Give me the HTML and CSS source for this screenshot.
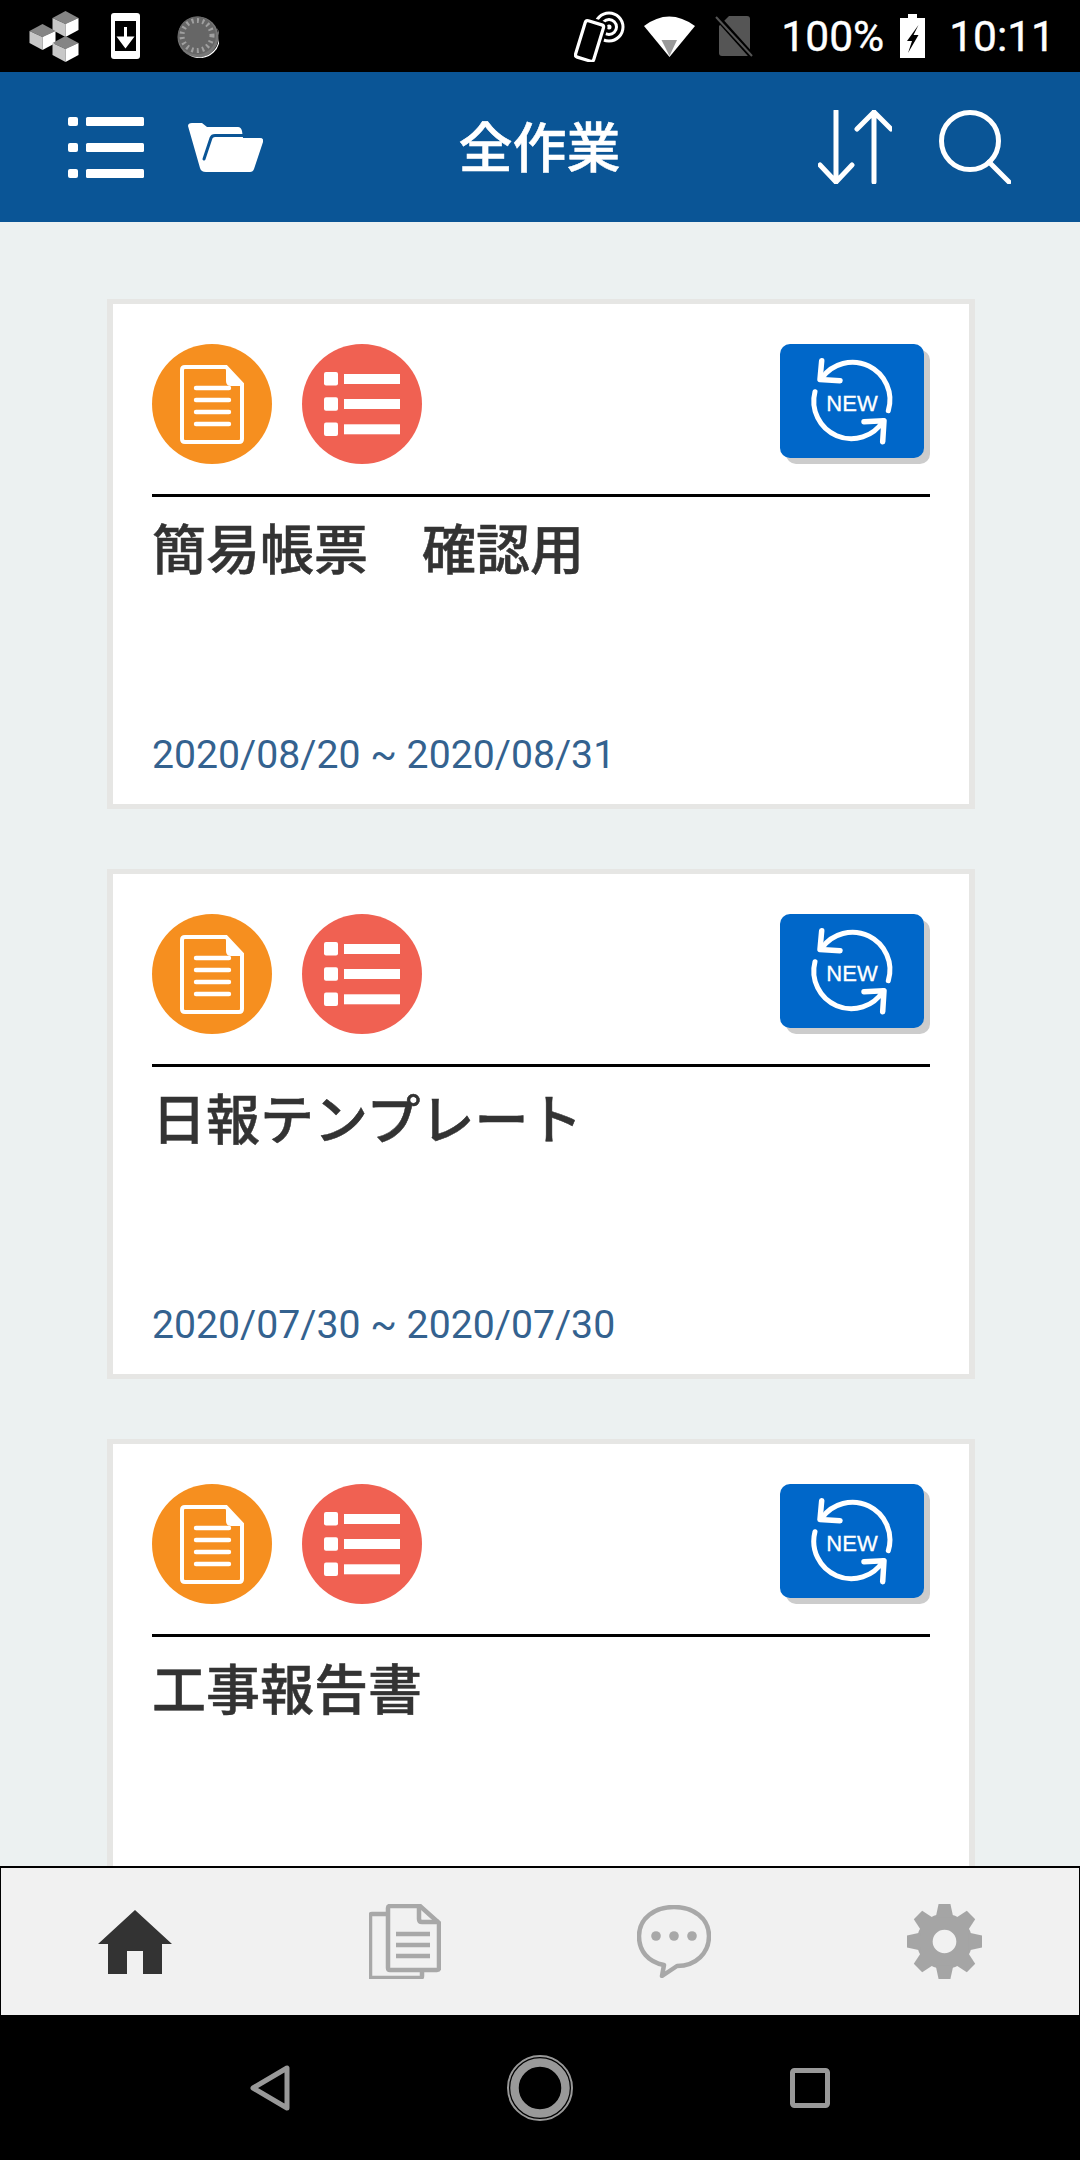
FILE: index.html
```html
<!DOCTYPE html>
<html lang="ja">
<head>
<meta charset="utf-8">
<title>全作業</title>
<link rel="stylesheet" href="styles.css">
</head>
<body>
<svg class="sprite" aria-hidden="true">
  <symbol id="doc-round" viewBox="0 0 120 120">
    <circle cx="60" cy="60" r="60" fill="#f68f1f"/>
    <path d="M33 23H74L90 40V95Q90 98 87 98H33Q30 98 30 95V26Q30 23 33 23Z" fill="none" stroke="#fff" stroke-width="4"/>
    <path d="M74 22L92 42H79Q74 42 74 37Z" fill="#fff"/>
    <path d="M44 44H77M44 56H77M44 68H77M44 80H77" stroke="#fff" stroke-width="4.4" stroke-linecap="round"/>
  </symbol>
  <symbol id="list-round" viewBox="0 0 120 120">
    <circle cx="60" cy="60" r="60" fill="#f06152"/>
    <rect x="22" y="28" width="14" height="13.4" rx="2" fill="#fff"/>
    <rect x="22" y="53.3" width="14" height="13.4" rx="2" fill="#fff"/>
    <rect x="22" y="78.6" width="14" height="13.4" rx="2" fill="#fff"/>
    <rect x="42" y="30" width="56" height="10" fill="#fff"/>
    <rect x="42" y="55" width="56" height="10" fill="#fff"/>
    <rect x="42" y="80.3" width="56" height="10" fill="#fff"/>
  </symbol>
  <symbol id="new-sync" viewBox="0 0 144 114">
    <path d="M41.7 34.3A37.5 37.5 0 0 1 108.300 66.700M35 47.700A37.500 37.500 0 0 0 103.300 76.700" fill="none" stroke="#fff" stroke-width="5" stroke-linecap="round"/>
    <path d="M41.7 16.7L40 35.5L60 36.7M84 77.7L104 76.7L102.7 97.7" fill="none" stroke="#fff" stroke-width="5.5" stroke-linecap="round" stroke-linejoin="round"/>
  </symbol>
  <symbol id="cube" viewBox="0 0 26 26">
    <path d="M13 0L26 7L13 13L0 7Z" fill="#858585"/>
    <path d="M0 7L13 13V26L0 19Z" fill="#c8c8c8"/>
    <path d="M26 7L13 13V26L26 19Z" fill="#fff"/>
  </symbol>
</svg>

<div class="app">
  <div class="statusbar">
    <div class="status-group">
      <svg class="st-cubes" viewBox="0 0 51 51">
        <use href="#cube" x="24" y="0" width="27" height="26"/>
        <use href="#cube" x="1" y="13" width="27" height="26"/>
        <use href="#cube" x="24" y="25" width="27" height="26"/>
      </svg>
      <svg class="st-dl" viewBox="0 0 29 46">
        <rect width="29" height="46" rx="3" fill="#fff"/>
        <rect x="4" y="8" width="21" height="30" fill="#000"/>
        <path d="M14.5 14V26M14.5 33L8.5 25H20.5Z" stroke="#fff" stroke-width="3" fill="#fff"/>
      </svg>
      <svg class="st-disc" viewBox="0 0 42 43">
        <circle cx="21" cy="22" r="20.5" fill="#777"/>
        <path d="M40 13A20.5 20.5 0 0 1 12 40A20 20 0 0 0 40 13Z" fill="#fff"/>
        <circle cx="20" cy="20.5" r="19" fill="#666"/>
        <circle cx="20" cy="20.5" r="15" fill="none" stroke="#a0a0a0" stroke-width="5" stroke-dasharray="2 3.4"/>
      </svg>
    </div>
    <div class="status-group">
      <svg class="st-nfc" viewBox="0 0 51 51">
        <circle cx="35" cy="16" r="14" fill="none" stroke="#fff" stroke-width="3"/>
        <circle cx="35" cy="16" r="7.500" fill="none" stroke="#fff" stroke-width="3"/>
        <circle cx="35" cy="16" r="2.500" fill="#fff"/>
        <rect x="6" y="11" width="19" height="38" rx="2.500" transform="rotate(17 15.500 30)" fill="#000" stroke="#000" stroke-width="8"/>
        <rect x="6" y="11" width="19" height="38" rx="2.500" transform="rotate(17 15.500 30)" fill="#000" stroke="#fff" stroke-width="3.200"/>
      </svg>
      <svg class="st-wifi" viewBox="0 0 51 41">
        <path d="M0 10Q25 -9 51 10L25.500 41Z" fill="#fff"/>
        <path d="M17.500 24H33L25.500 40Z" fill="#9a9a9a"/>
      </svg>
      <svg class="st-sim" viewBox="0 0 38 42">
        <path d="M14 1H32Q35 1 35 4V38Q35 41 32 41H7Q4 41 4 38V11Z" fill="#555"/>
        <path d="M1 1L37 41" stroke="#000" stroke-width="6"/>
        <path d="M1 2L37 41" stroke="#555" stroke-width="2"/>
      </svg>
      <span class="st-pct">100%</span>
      <svg class="st-batt" viewBox="0 0 25 44">
        <path d="M8 0H17V4H25V44H0V4H8Z" fill="#fff"/>
        <path d="M18.500 11L7 27H12L8 39L18.500 21H13.500Z" fill="#000"/>
      </svg>
      <span class="st-time">10:11</span>
    </div>
  </div>

  <header class="topbar">
    <div class="top-left">
      <svg class="ic-menu" viewBox="0 0 76 62">
        <rect y="1" width="10" height="9" rx="2" fill="#fff"/>
        <rect y="27" width="10" height="9" rx="2" fill="#fff"/>
        <rect y="53" width="10" height="9" rx="2" fill="#fff"/>
        <rect x="18" y="1" width="58" height="9" rx="1.500" fill="#fff"/>
        <rect x="18" y="27" width="58" height="9" rx="1.500" fill="#fff"/>
        <rect x="18" y="53" width="58" height="9" rx="1.500" fill="#fff"/>
      </svg>
      <svg class="ic-folder" viewBox="0 0 75 50">
        <path d="M0 4Q0 1 4 1H14L19 5H50Q53 5 54 9L55 16H72Q76 16 75 20L66 47Q65 50 62 50H18Q13 50 12 46Z" fill="#fff"/>
        <path d="M56 13.500H27Q24 13.500 23 16L16 37" fill="none" stroke="#0a5596" stroke-width="3" stroke-linecap="round"/>
      </svg>
    </div>
    <h1 class="top-title">全作業</h1>
    <div class="top-right">
      <svg class="ic-sort" viewBox="0 0 74 74">
        <path d="M18 1V72M2 55L18 72L34 55M56 72V2M39 19L56 2L73 19" fill="none" stroke="#fff" stroke-width="5" stroke-linecap="round" stroke-linejoin="round"/>
      </svg>
      <svg class="ic-search" viewBox="0 0 72 74">
        <circle cx="31" cy="31" r="28.500" fill="none" stroke="#fff" stroke-width="5"/>
        <path d="M50 52L70 72" stroke="#fff" stroke-width="5" stroke-linecap="round"/>
      </svg>
    </div>
  </header>

  <main class="content">
    <article class="card">
      <div class="card-head">
        <div class="card-icons">
          <svg class="round-ic"><use href="#doc-round"/></svg>
          <svg class="round-ic"><use href="#list-round"/></svg>
        </div>
        <div class="new-btn"><svg class="new-ic"><use href="#new-sync"/></svg><span class="new-label">NEW</span></div>
      </div>
      <h2 class="card-title">簡易帳票　確認用</h2>
      <p class="card-date">2020/08/20 ~ 2020/08/31</p>
    </article>
    <article class="card">
      <div class="card-head">
        <div class="card-icons">
          <svg class="round-ic"><use href="#doc-round"/></svg>
          <svg class="round-ic"><use href="#list-round"/></svg>
        </div>
        <div class="new-btn"><svg class="new-ic"><use href="#new-sync"/></svg><span class="new-label">NEW</span></div>
      </div>
      <h2 class="card-title">日報テンプレート</h2>
      <p class="card-date">2020/07/30 ~ 2020/07/30</p>
    </article>
    <article class="card">
      <div class="card-head">
        <div class="card-icons">
          <svg class="round-ic"><use href="#doc-round"/></svg>
          <svg class="round-ic"><use href="#list-round"/></svg>
        </div>
        <div class="new-btn"><svg class="new-ic"><use href="#new-sync"/></svg><span class="new-label">NEW</span></div>
      </div>
      <h2 class="card-title">工事報告書</h2>
    </article>
  </main>

  <nav class="tabbar">
    <div class="tab">
      <svg class="ic-home" viewBox="0 0 74 64">
        <path d="M37 0L74 34H64V64H45V41H29V64H10V34H0Z" fill="#333"/>
      </svg>
    </div>
    <div class="tab">
      <svg class="ic-docs" viewBox="0 0 72 75">
        <path d="M19 10H3Q1 10 1 12V72Q1 74 3 74H51Q53 74 53 72V66" fill="none" stroke="#a8a8a8" stroke-width="4.500"/>
        <path d="M21 2H51L70 19V64Q70 66 68 66H21Q19 66 19 64V4Q19 2 21 2Z" fill="none" stroke="#a8a8a8" stroke-width="4.500"/>
        <path d="M50 2V15Q50 18 53 18H70" fill="none" stroke="#a8a8a8" stroke-width="4.500"/>
        <path d="M27 30H61M27 41H61M27 52H61" stroke="#a8a8a8" stroke-width="4.500"/>
      </svg>
    </div>
    <div class="tab">
      <svg class="ic-chat" viewBox="0 0 74 73">
        <path d="M37 2C18 2 2 13 2 31C2 46 11 57 27 60L25 71L40 61C59 61 72 48 72 31C72 13 56 2 37 2Z" fill="none" stroke="#a8a8a8" stroke-width="4.500" stroke-linejoin="round"/>
        <circle cx="19" cy="31" r="4.800" fill="#a8a8a8"/>
        <circle cx="37" cy="31" r="4.800" fill="#a8a8a8"/>
        <circle cx="55" cy="31" r="4.800" fill="#a8a8a8"/>
      </svg>
    </div>
    <div class="tab">
      <svg class="ic-gear" viewBox="-38 -38 76 76">
        <circle r="20" fill="none" stroke="#a5a5a5" stroke-width="16"/>
        <g fill="#a5a5a5">
          <path id="tooth" d="M-6 -38H6L9 -24H-9Z"/>
          <use href="#tooth" transform="rotate(45)"/>
          <use href="#tooth" transform="rotate(90)"/>
          <use href="#tooth" transform="rotate(135)"/>
          <use href="#tooth" transform="rotate(180)"/>
          <use href="#tooth" transform="rotate(225)"/>
          <use href="#tooth" transform="rotate(270)"/>
          <use href="#tooth" transform="rotate(315)"/>
        </g>
      </svg>
    </div>
  </nav>

  <div class="sysnav">
    <div class="sys-slot">
      <svg class="sys-back" viewBox="0 0 40 46">
        <path d="M37 3V43L3 23Z" fill="none" stroke="#999" stroke-width="5" stroke-linejoin="round"/>
      </svg>
    </div>
    <div class="sys-slot">
      <svg class="sys-home" viewBox="0 0 68 68">
        <circle cx="34" cy="34" r="32" fill="none" stroke="#999" stroke-width="2"/>
        <circle cx="34" cy="34" r="25.500" fill="none" stroke="#999" stroke-width="8.500"/>
      </svg>
    </div>
    <div class="sys-slot">
      <svg class="sys-square" viewBox="0 0 40 40">
        <rect x="2.500" y="2.500" width="35" height="35" rx="2" fill="none" stroke="#999" stroke-width="5"/>
      </svg>
    </div>
  </div>
</div>
</body>
</html>
```
FILE: styles.css
```css
* { box-sizing: border-box; }
html, body { margin: 0; padding: 0; background: #000; }
.sprite { display: none; }
svg { display: block; flex: none; }

.app {
  width: 1080px;
  height: 2160px;
  display: flex;
  flex-direction: column;
  overflow: hidden;
  font-family: "Noto Sans CJK JP", Roboto, sans-serif;
}

/* status bar */
.statusbar {
  flex: none;
  height: 72px;
  background: #000;
  color: #fff;
  display: flex;
  align-items: center;
  justify-content: space-between;
  padding: 0 25px 0 28px;
  font-family: Roboto, sans-serif;
  font-size: 42.5px;
  -webkit-text-stroke: 0.4px #fff;
}
.status-group { display: flex; align-items: center; }
.st-cubes { width: 51px; height: 51px; }
.st-dl { width: 29px; height: 46px; margin-left: 32px; }
.st-disc { width: 42px; height: 43px; margin-left: 37px; }
.st-nfc { width: 51px; height: 51px; }
.st-wifi { width: 51px; height: 41px; margin-left: 19px; }
.st-sim { width: 38px; height: 42px; margin-left: 20px; }
.st-pct { margin-left: 28px; }
.st-batt { width: 25px; height: 44px; margin-left: 16px; }
.st-time { margin-left: 24px; }

/* header */
.topbar {
  flex: none;
  height: 150px;
  background: #0a5596;
  display: grid;
  grid-template-columns: 1fr auto 1fr;
  align-items: center;
  padding: 0 69px 0 68px;
}
.top-left { display: flex; align-items: center; gap: 44px; }
.top-right { display: flex; align-items: center; justify-content: flex-end; gap: 47px; }
.ic-menu { width: 76px; height: 62px; }
.ic-folder { width: 75px; height: 50px; }
.ic-sort { width: 74px; height: 74px; }
.ic-search { width: 72px; height: 74px; }
.top-title {
  margin: 0 0 5px;
  color: #fff;
  font-size: 54px;
  font-weight: 500;
  line-height: 1;
  -webkit-text-stroke: 0.5px #fff;
}

/* list */
.content {
  flex: 1;
  min-height: 0;
  overflow: hidden;
  background: #ecf1f1;
  display: flex;
  flex-direction: column;
  gap: 60px;
  padding: 77px 105px 0 107px;
}
.card {
  flex: none;
  height: 510px;
  background: #fff;
  border-style: solid;
  border-color: #e6e6e4;
  border-width: 5px 6px;
  padding: 40px 39px 0;
  display: flex;
  flex-direction: column;
}
.card-head {
  flex: none;
  display: flex;
  justify-content: space-between;
  padding: 0 6px 30px 0;
  border-bottom: 3px solid #000;
}
.card-icons { display: flex; gap: 30px; }
.round-ic { width: 120px; height: 120px; }
.new-btn {
  position: relative;
  width: 144px;
  height: 114px;
  background: #0067c9;
  border-radius: 10px;
  box-shadow: 6px 6px 0 #ccc;
}
.new-ic { width: 144px; height: 114px; }
.new-label {
  position: absolute;
  left: 0;
  right: 0;
  top: 46px;
  text-align: center;
  color: #fff;
  font-family: "Liberation Sans", sans-serif;
  font-size: 22px;
  line-height: 28px;
  -webkit-text-stroke: 0.3px #fff;
}
.card-title {
  margin: 14px 0 0;
  font-size: 54px;
  font-weight: 500;
  line-height: 72px;
  color: #333;
  -webkit-text-stroke: 0.5px #333;
}
.card-date {
  margin: auto 0 0;
  padding-bottom: 25px;
  font-family: Roboto, sans-serif;
  font-size: 39.2px;
  line-height: 48px;
  color: #34628f;
}

/* tab bar */
.tabbar {
  flex: none;
  height: 149px;
  background: #f1f1f1;
  border-top: 2px solid #000;
  border-left: 1px solid #000;
  border-right: 1px solid #000;
  display: grid;
  grid-template-columns: repeat(4, 1fr);
}
.tab { display: flex; align-items: center; justify-content: center; }
.ic-home { width: 74px; height: 64px; margin-right: 2px; }
.ic-docs { width: 72px; height: 75px; }
.ic-chat { width: 74px; height: 73px; margin-right: 1px; }
.ic-gear { width: 75px; height: 75px; }

/* system nav */
.sysnav {
  flex: none;
  height: 145px;
  background: #000;
  display: flex;
  justify-content: center;
  align-items: center;
}
.sys-slot { width: 270px; display: flex; justify-content: center; }
.sys-back { width: 40px; height: 46px; }
.sys-home { width: 68px; height: 68px; }
.sys-square { width: 40px; height: 40px; }
```
